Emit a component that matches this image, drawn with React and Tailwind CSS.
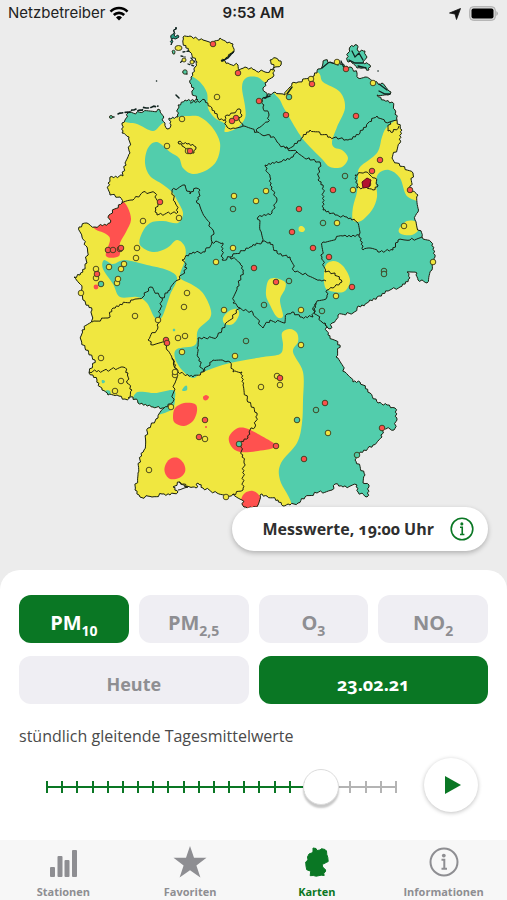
import { useState } from "react";

// ---------- geometry helpers ----------
const parse = (s) => s.trim().split(/\s+/).map((p) => p.split(",").map(Number));

// Breaks straight segments into small irregular steps, like a surveyed border.
function rough(s, closed = false) {
  const pts = parse(s);
  if (closed) pts.push(pts[0]);
  let out = `M${pts[0][0]} ${pts[0][1]}`;
  for (let i = 1; i < pts.length; i++) {
    const [ax, ay] = pts[i - 1];
    const [bx, by] = pts[i];
    const len = Math.hypot(bx - ax, by - ay);
    const n = Math.max(1, Math.round(len / 2));
    for (let k = 1; k < n; k++) {
      const h = Math.sin(ax * 12.9 + ay * 78.2 + k * 37.7) * 43758.5;
      const d = (h - Math.floor(h) - 0.5) * 3;
      const t = k / n;
      const x = ax + (bx - ax) * t - ((by - ay) / len) * d;
      const y = ay + (by - ay) * t + ((bx - ax) / len) * d;
      out += `L${x.toFixed(1)} ${y.toFixed(1)}`;
    }
    out += `L${bx} ${by}`;
  }
  return closed ? out + "Z" : out;
}

// Closed Catmull-Rom curve through the points.
function smooth(s) {
  const p = parse(s);
  const n = p.length;
  let out = `M${p[0][0]} ${p[0][1]}`;
  for (let i = 0; i < n; i++) {
    const a = p[(i - 1 + n) % n];
    const b = p[i];
    const c = p[(i + 1) % n];
    const d = p[(i + 2) % n];
    out += `C${(b[0] + (c[0] - a[0]) / 6).toFixed(1)} ${(b[1] + (c[1] - a[1]) / 6).toFixed(1)} ${(c[0] - (d[0] - b[0]) / 6).toFixed(1)} ${(c[1] - (d[1] - b[1]) / 6).toFixed(1)} ${c[0]} ${c[1]}`;
  }
  return out + "Z";
}

const COUNTRY = `183,37 190,36 203,40 213,43 220,38 227,43 233,44 234,51 228,57 221,61 228,63 238,65 239,70 245,67 255,70 265,72 273,70
 274,67 270,60 276,58 281,61 281,65 275,67 273,77 267,82 263,88 267,96 275,92 285,95 292,83 298,82 310,77 317,73 323,63 325,60 332,63 340,62
 345,68 350,67 357,73 358,78 365,77 373,83 382,83 391,92 388,95 377,95 384,100 392,102 395,110 397,120 402,130 400,143 392,158 397,163 413,173 410,190
 418,195 418,212 415,220 422,237 431,242 435,257 432,270 427,283 418,280 417,273 407,272 410,278 400,287 390,290 377,297 367,303 357,308 353,313
 338,315 332,323 330,329 325,323 328,335 340,345 336,357 345,372 353,382 360,382 370,393 378,403 387,405 395,408 397,420 394,430 382,427
 382,437 373,445 357,455 355,460 365,475 363,483 369,485 367,497 358,492 357,485 343,487 335,484 332,490 317,493 305,497 298,503 290,505
 283,506 278,500 267,496 260,495 258,505 252,508 244,507 242,500 233,494 226,497 217,493 203,488 198,483 196,488 193,487 185,487 180,482 173,487
 178,492 170,495 162,494 152,497 140,497 135,490 138,473 140,460 144,450 148,428 158,418 164,408 153,407 138,403 133,397 125,399 117,395
 108,395 102,390 97,380 89,373 95,360 85,348 81,340 82,330 92,320 92,310 83,300 82,288 74,277 80,275 87,263 87,247 82,237 79,227 87,223
 95,227 110,223 109,215 122,203 120,197 110,195 108,183 110,177 123,176 125,163 130,153 129,137 122,133 122,123 125,120 128,113 143,112 160,110
 165,123 167,129 171,125 169,118 178,117 178,105 185,100 198,100 192,93 194,88 190,83 191,77 195,67 197,62 190,52 183,43`;

const RUEGEN = "350,47 357,45 358,51 365,51 367,57 363,62 370,65 369,70 363,68 357,68 352,63 347,60 348,53";
const SYLT = "176,27 174,32 174,35 179,37 173,38 171,45 171,38";

const YELLOW = [
  "185,72 190,75 200,82 207,93 208,108 215,118 225,124 225,132 237,128 245,118 245,106 242,87 246,78 257,77 270,83 290,65 270,30 180,22 170,50",
  `95,115 125,122 137,124 153,131 163,123 178,117 190,116 200,117 212,127 220,143 217,160 207,170 193,174 183,168 179,158 170,152 157,142
   148,148 145,163 150,176 162,184 172,192 177,200 183,213 178,223 163,221 150,223 142,233 140,245 153,252 167,248 177,240 185,247 185,260 180,277
   191,284 202,292 210,307 210,318 198,330 195,345 177,349 175,358 182,370 193,378 203,372 230,363 263,357 280,354 283,345 282,333 290,329 297,333
   298,342 293,352 303,372 303,400 302,423 297,443 281,463 280,480 292,507 280,530 60,530 50,300`,
  "273,88 280,100 285,110 300,135 310,147 322,159 330,167 342,167 348,158 342,150 335,148 332,142 337,127 345,108 340,92 323,82 317,72 290,70",
  "402,116 387,127 382,137 377,153 360,167 358,177 357,192 353,207 353,220 361,221 372,210 377,197 376,182 379,173 389,170 400,178 408,197 428,197 428,150 412,110",
  "325,267 333,261 343,266 350,280 345,291 335,292 325,287",
  "268,281 275,278 285,282 285,289 280,300 283,316 277,317 270,305 266,295",
  "399,229 407,221 417,222 419,229 412,235 401,234",
  "223,318 229,311 237,309 239,315 233,324 225,324",
  "299,227 302,226 305,229 303,232 299,231",
];
const TEAL = [
  "125,260 147,265 167,270 177,278 170,295 162,317 155,318 147,303 137,297 120,297 113,284 103,269 104,260 113,264",
  "136,393 145,392 155,393 173,390 175,398 171,410 150,415 134,402",
  "182,390 185,386 187,386 187,390 184,391",
  "102,380 105,381 104,383 102,383",
  "105,391 110,391 110,397 104,397",
  "173,329 175,329 175,331 173,331",
];
const RED = [
  "122,201 128,208 131,220 126,232 120,243 119,256 106,256 110,240 106,234 93,227 92,210 110,200",
  "173,417 175,408 184,403 195,404 197,411 193,421 184,426 175,423",
  "165,466 170,459 178,458 184,464 185,472 179,478 170,479 165,473",
  "229,437 236,429 245,428 258,434 276,446 258,451 240,452 231,446",
  "241,500 245,493 253,491 260,497 263,512 240,514",
  "203,397 206,395 209,397 207,400 204,400",
];
const BORDERS = [
  "190,103 205,100 212,108 218,118 225,120",
  "225,120 227,115 233,113 240,109 242,115 239,120 243,126 233,128 227,127 225,120",
  "243,126 257,132 262,135 270,135 277,142 285,148 297,152 310,160 320,162 318,180 323,185 323,210 335,215 347,217 357,222 359,235",
  "285,148 292,147 303,137 310,130 330,137 348,140 360,133 368,123 377,116 385,122 397,120",
  "267,96 262,99 263,107 269,115 268,122 258,128 257,132",
  "297,152 293,157 280,162 265,165 270,177 272,187 277,200 272,213 258,217 260,230 262,242",
  "359,235 363,250 370,248 378,252 393,250 398,240 410,240 422,237",
  "359,235 343,236 323,242 322,257 325,272 335,273 342,282 333,288 327,290 327,297 316,303 313,310 322,322 325,323",
  "262,242 270,242 277,253 290,257 295,272 307,275 320,280 326,281",
  "240,308 253,313 263,328 270,320 285,323 287,314 292,312 300,317 313,317 316,303",
  "230,257 240,263 243,272 237,287 233,303 240,308 225,325 217,337 198,338 197,348 198,357 203,372 193,377 178,372 172,358",
  "262,242 250,247 230,257 222,260 223,243 212,242 213,230 205,217 197,203 200,190 196,188 190,194 185,185 172,190 175,202 178,212 157,215 155,212 158,204 155,193 143,192 133,200 122,203",
  "212,242 205,252 193,252 182,260 187,268 178,280 170,290 162,298",
  "162,298 150,287 143,297 133,300 113,308 108,318 92,322",
  "162,298 160,310 158,327 148,340 153,345 165,342 167,350 172,358 174,366 177,373 175,383 172,403 164,408",
  "89,372 110,370 123,367 128,373 127,383 132,390 128,398",
  "203,372 213,360 224,361 230,362 233,372 242,372 243,385 247,400 257,413 255,427 250,430 248,438 240,443 244,463 243,490 233,494",
  "178,142 187,144 196,147 194,153 187,152 184,147 178,142",
  "355,175 365,172 375,178 378,185 373,190 366,187 357,188 355,175",
  "228,57 234,51",
  "390,122 388,131 393,132 399,126",
  "179,482 184,484 188,487 178,490",
];

const DOTS = {
  red: `213,44 238,73 259,101 286,115 312,84 346,69 356,116 380,160 372,171 410,190 333,190 299,209 292,232 313,248 329,257 352,287 254,268 276,282
   190,151 236,118 160,202 108,250 113,250 120,249 121,248 97,274 166,340 167,343 205,420 199,437 276,446 304,459 325,403 382,428 280,378 232,121 368,184`,
  yellow: `217,97 311,79 373,83 337,62 353,190 337,223 234,196 256,201 266,191 233,248 216,262 404,226 433,262 336,296 188,151 182,119 167,146 143,221 179,218 137,248
   136,258 109,267 121,269 124,264 96,269 96,278 117,283 118,279 81,293 135,316 187,293 184,307 178,338 185,336 158,320 182,352 224,310 235,356 301,345
   101,358 121,381 115,391 175,375 171,407 205,439 149,470 261,387 280,385 277,376 328,433 226,497 175,372 301,310`,
  teal: "345,176 233,209 323,223 384,271 384,274 322,311 264,305 289,281 246,341 316,410 297,420 239,444 101,284 289,97 357,455",
};

const ISLANDS = "118,114 122,113 128,112 134,110 140,110 146,108 152,107 158,106";

function GermanyMap() {
  const country = rough(COUNTRY, true);
  const ruegen = rough(RUEGEN, true);
  const sylt = rough(SYLT, true);
  const fills = { red: "#fb504c", yellow: "#f0e640", teal: "#50c9a4" };
  return (
    <svg viewBox="0 27 507 543" className="block w-full" role="img" aria-label="Deutschlandkarte">
      <defs>
        <clipPath id="land">
          <path d={country} />
          <path d={ruegen} />
        </clipPath>
      </defs>
      <g clipPath="url(#land)">
        <rect x="60" y="20" width="390" height="500" fill="#52cdac" />
        {YELLOW.map((s) => <path key={s} d={smooth(s)} fill="#f0e740" />)}
        {TEAL.map((s) => <path key={s} d={smooth(s)} fill="#52cdac" />)}
        {RED.map((s) => <path key={s} d={smooth(s)} fill="#ff514f" />)}
      </g>
      <path d={sylt} fill="#2a9c84" stroke="#10231f" strokeWidth="1" />
      <g fill="none" stroke="#1c1f10" strokeWidth="1" strokeLinejoin="round">
        <path d={country} />
        <path d={ruegen} />
        {BORDERS.map((s) => <path key={s} d={rough(s)} />)}
      </g>
      <g fill="none" stroke="#10231f" strokeLinecap="round">
        <path d={rough(ISLANDS)} strokeWidth="1.6" strokeDasharray="5 2.4" />
        <path d="M110 117l4 0M156.500 81h.1M176 95l3 3M378 71h.1" strokeWidth="1.5" />
        <path d="M322 68l6 -5M330 62l8 3M341 61l3 7M352 51l3 6 4 -4 4 7M349 60l6 3 8 0M358 66l8 2M379 91l6 3 5 0M379 84l8 6" strokeWidth="1.3" />
        <path d="M287 94l5 -7M222 61l6 -3 5 -6M264 98l6 -2M183 72l4 2" strokeWidth="1.5" />
        <path d="M181 56l4 1M183 52l6 -1M182 61l-2 2M191 58l4 4M188 64l6 2" strokeWidth="1.3" strokeDasharray="2 2" />
      </g>
      <g stroke="#2c2c14" strokeWidth="0.9">
        <ellipse cx="178.500" cy="48" rx="3.500" ry="2.500" fill="#f0e640" />
        <path d="M172 51q3-2 3 1t-2 2z" fill="#50c9a4" />
        <circle cx="184" cy="60" r="2" fill="#f0e640" />
        <circle cx="192" cy="62" r="2" fill="#f0e640" />
        <circle cx="185" cy="72" r="2.200" fill="#50c9a4" />
        <circle cx="111" cy="117" r="1.500" fill="#50c9a4" />
      </g>
      {["yellow", "teal", "red"].map((c) => (
        <g key={c} fill={fills[c]} stroke="#3d3a18" strokeWidth="0.9">
          {parse(DOTS[c]).map(([x, y]) => <circle key={`${x}-${y}`} cx={x} cy={y} r="2.800" />)}
        </g>
      ))}
      <path d="M362 182l5 -4 4 2 -2 7 -6 1z" fill="#b3122f" stroke="#5a0f1c" strokeWidth="1" />
      <circle cx="96" cy="287" r="2.400" fill="#fb504c" />
      <circle cx="206" cy="427" r="1" fill="#fb504c" />
    </svg>
  );
}

function StatusBar() {
  return (
    <header className="grid h-[27px] grid-cols-3 items-center px-2 font-['Inter',sans-serif] text-[15px] text-[#222]">
      <div className="flex items-center gap-1">
        <span>Netzbetreiber</span>
        <svg viewBox="0 0 20 15" className="h-[15px] w-5" fill="none" stroke="#000" strokeWidth="2.600">
          <path d="M1.500 5.600a12 12 0 0 1 17 0" />
          <path d="M4.800 9a7.400 7.400 0 0 1 10.400 0" />
          <path d="M10 14.600l-3-3.200a4.300 4.300 0 0 1 6 0z" fill="#000" stroke="none" />
        </svg>
      </div>
      <span className="text-center font-semibold">9:53 AM</span>
      <div className="flex items-center justify-end gap-2">
        <svg viewBox="0 0 12 12" className="h-3 w-3"><path d="M11.500 .5L7.500 11.500 6 6 .5 5z" fill="#111" stroke="#111" strokeWidth=".8" strokeLinejoin="round" /></svg>
        <svg viewBox="0 0 30 15" className="h-[15px] w-[30px]">
          <rect x=".7" y=".7" width="25.600" height="13.600" rx="3.500" fill="#d8d8d8" stroke="#aaa" />
          <rect x="2.500" y="2.500" width="22" height="10" rx="2" fill="#000" />
          <path d="M27.500 5q2.500 2.500 0 5z" fill="#999" />
        </svg>
      </div>
    </header>
  );
}

function Choice({ active, size, onClick, children }) {
  return (
    <button
      type="button"
      aria-pressed={active}
      onClick={onClick}
      className={`h-12 flex-1 rounded-xl pt-2 font-bold oldstyle-nums ${size} ${active ? "bg-[#0a7724] text-white" : "bg-[#efeef3] text-[#8e8e92]"}`}
    >
      {children}
    </button>
  );
}

const Sub = ({ children }) => <sub className="bottom-[-6px] text-sm leading-none lining-nums">{children}</sub>;

const POLLUTANTS = [
  ["PM", "10"],
  ["PM", "2,5"],
  ["O", "3"],
  ["NO", "2"],
];

function HourSlider() {
  const [hour, setHour] = useState(18);
  return (
    <div className="relative mt-1 mr-[9px] ml-[9px] flex h-10 flex-1 items-center px-[18px]">
      <div className="relative flex h-3 w-full items-center justify-between">
        <div className="absolute inset-x-0 h-[2px] bg-[#b4b4b4]" />
        <div className="absolute left-0 h-[2px] bg-[#0a7724]" style={{ width: `${(hour / 23) * 100}%` }} />
        {Array.from({ length: 24 }, (_, i) => (
          <span key={i} className={`relative h-3 w-[2px] ${i <= hour ? "bg-[#0a7724]" : "bg-[#b4b4b4]"}`} />
        ))}
      </div>
      <input
        type="range"
        min="0"
        max="23"
        value={hour}
        onChange={(e) => setHour(Number(e.target.value))}
        aria-label="Uhrzeit"
        className="absolute inset-0 m-0 h-10 w-full cursor-pointer appearance-none bg-transparent [&::-webkit-slider-thumb]:h-9 [&::-webkit-slider-thumb]:w-9 [&::-webkit-slider-thumb]:appearance-none [&::-webkit-slider-thumb]:rounded-full [&::-webkit-slider-thumb]:border [&::-webkit-slider-thumb]:border-[#dcdcdc] [&::-webkit-slider-thumb]:bg-white [&::-webkit-slider-thumb]:shadow-[0_3px_2px_rgba(0,0,0,0.22)]"
      />
    </div>
  );
}

const InfoIcon = ({ className }) => (
  <svg viewBox="0 0 30 30" className={className} fill="none" stroke="currentColor">
    <circle cx="15" cy="15" r="13.500" strokeWidth="2" />
    <circle cx="14.800" cy="8.600" r="1.900" fill="currentColor" stroke="none" />
    <path d="M12.500 12.800h2.800v8.600M12.500 21.800h5.500" strokeWidth="2" />
  </svg>
);

const TABS = [
  {
    label: "Stationen",
    icon: (
      <svg viewBox="0 0 30 30" className="h-[30px] w-[30px]" fill="currentColor">
        <rect x="2" y="20" width="5" height="10" rx="1" />
        <rect x="9.500" y="9" width="5" height="21" rx="1" />
        <rect x="16.500" y="13" width="5" height="17" rx="1" />
        <rect x="24" y="3" width="5" height="27" rx="1" />
      </svg>
    ),
  },
  {
    label: "Favoriten",
    icon: (
      <svg viewBox="0 0 34 32" className="h-8 w-[34px]" fill="currentColor">
        <path d="M17 0l4 11.800h12.500L23.400 19.400l4 12.200L17 24.200 6.600 31.600l4-12.200L.5 11.800H13z" />
      </svg>
    ),
  },
  {
    label: "Karten",
    icon: (
      <svg viewBox="0 0 24 30" className="h-[30px] w-6" fill="currentColor" stroke="currentColor" strokeLinejoin="round">
        <path d="M8 1l3 .5 1 2 3-.5 1.500-1.300L20 2.500l1.500 1.500.3 3.500 1 3 .4 4-2 1-4 2 .5 2.500 3 3-.5 2-1.500 1 .5 2.500-3-.3-5 1-3-.7-3 .2.500-4.500-4-1.500L1 19l-.3-4L3 13 2.500 10l1.500-3 2.500-1 1.500-1z" />
      </svg>
    ),
  },
  { label: "Informationen", icon: <InfoIcon className="h-[30px] w-[30px]" /> },
];

export default function App() {
  const [pollutant, setPollutant] = useState(0);
  const [day, setDay] = useState(1);
  return (
    <div className="flex min-h-screen flex-col bg-[#ececec] font-['Open_Sans','Noto_Sans',sans-serif]">
      <StatusBar />
      <section className="relative">
        <GermanyMap />
        <button
          type="button"
          className="absolute right-[19px] bottom-[19px] flex h-11 items-center gap-4 rounded-full bg-white pr-[14px] pl-[30px] text-base font-bold text-[#2f2f2f] oldstyle-nums shadow-[0_2px_5px_rgba(0,0,0,0.25)]"
        >
          Messwerte, 19:00 Uhr
          <InfoIcon className="h-6 w-6 text-[#0a7724]" />
        </button>
      </section>

      <main className="flex flex-1 flex-col rounded-t-[20px] bg-white px-[19px] pt-[25px]">
        <div className="flex gap-[10px]">
          {POLLUTANTS.map(([name, sub], i) => (
            <Choice key={name + sub} size="text-xl leading-none" active={pollutant === i} onClick={() => setPollutant(i)}>
              {name}
              <Sub>{sub}</Sub>
            </Choice>
          ))}
        </div>
        <div className="mt-[13px] flex gap-[10px]">
          {["Heute", "23.02.21"].map((label, i) => (
            <Choice key={label} size="text-lg leading-none" active={day === i} onClick={() => setDay(i)}>
              {label}
            </Choice>
          ))}
        </div>
        <p className="mt-5 text-base text-[#4a4a4a]">stündlich gleitende Tagesmittelwerte</p>
        <div className="mt-[10px] flex items-center pr-[10px]">
          <HourSlider />
          <button
            type="button"
            aria-label="Abspielen"
            className="flex h-[54px] w-[54px] items-center justify-center rounded-full bg-white shadow-[0_1px_4px_rgba(0,0,0,0.25)]"
          >
            <svg viewBox="0 0 16 18" className="ml-1 h-[18px] w-4"><path d="M0 0l16 9-16 9z" fill="#0a7724" /></svg>
          </button>
        </div>
      </main>

      <nav className="grid h-[60px] grid-cols-4 bg-[#f7f7f7]">
        {TABS.map(({ label, icon }) => (
          <a
            key={label}
            href="#"
            aria-current={label === "Karten" ? "page" : undefined}
            className={`flex flex-col items-center pt-[7px] text-[11px] leading-4 font-bold ${label === "Karten" ? "text-[#0a7724]" : "text-[#8e8e92]"}`}
          >
            <span className="flex h-[30px] items-center">{icon}</span>
            <span className="mt-[7px]">{label}</span>
          </a>
        ))}
      </nav>
    </div>
  );
}
